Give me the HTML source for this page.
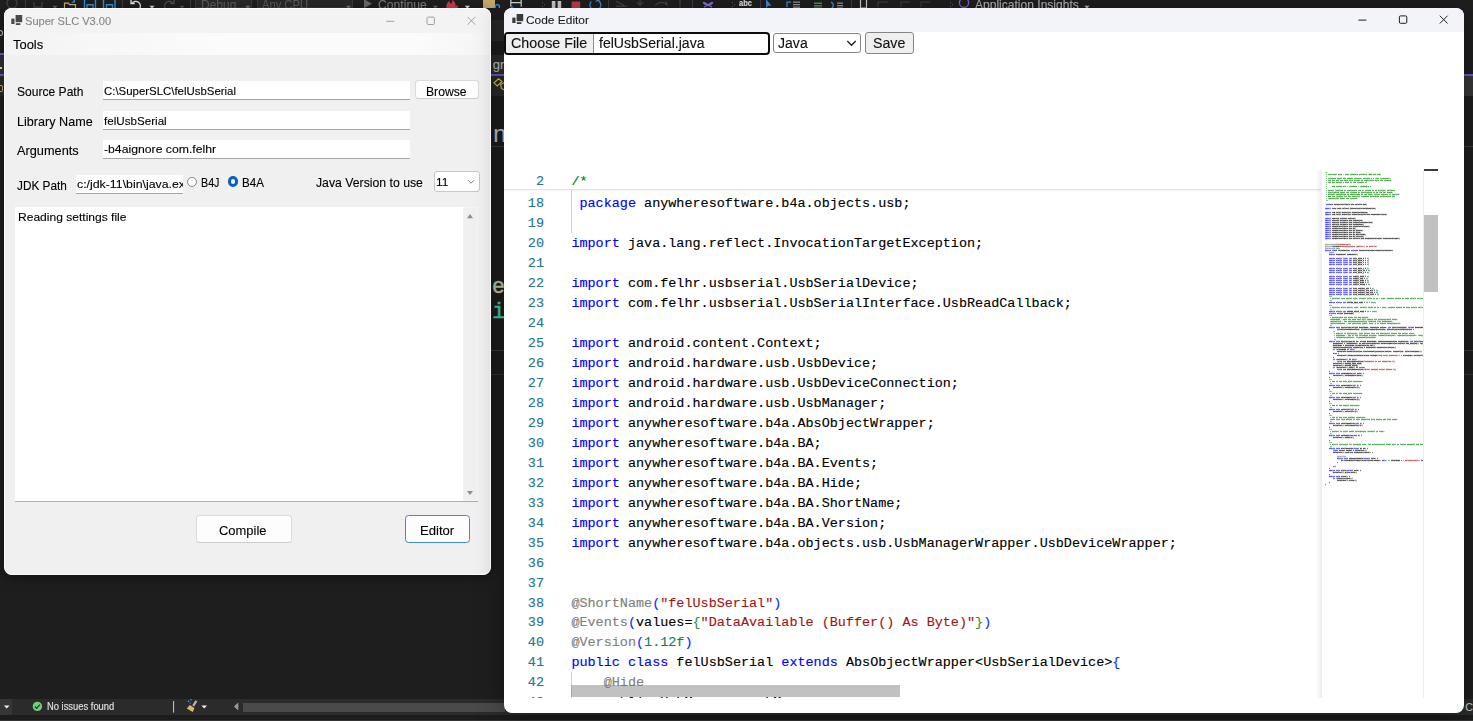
<!DOCTYPE html>
<html lang="en"><head><meta charset="utf-8"><title>Super SLC V3.00 - Code Editor</title>
<style>
html,body{margin:0;padding:0}
body{width:1473px;height:721px;overflow:hidden;background:#1e1e1e;position:relative;font-family:"Liberation Sans",sans-serif;}
.abs,.t{position:absolute}
.t{white-space:pre;line-height:normal;transform-origin:0 0;color:#000;font-family:"Liberation Sans",sans-serif;-webkit-text-stroke:0.12px currentColor}
#w1{position:absolute;left:3.7px;top:8.4px;width:487.8px;height:566.2px;background:#f0f0f0;border-radius:8px;overflow:hidden;box-shadow:0 2px 14px rgba(0,0,0,.4)}
#w2{position:absolute;left:504px;top:7.5px;width:960.4px;height:705.7px;background:#fff;border-radius:8px;overflow:hidden;box-shadow:0 4px 28px rgba(0,0,0,.36)}
.tb{position:absolute;background:#fff;border-bottom:1px solid #a6a6a6;box-sizing:border-box}
.btn{position:absolute;background:#fdfdfd;border:1px solid #dadada;border-bottom-color:#cbcbcb;border-radius:3.5px;box-sizing:border-box}
#code{position:absolute;left:504px;top:170px;width:816.5px;height:527.5px;overflow:hidden}
.cl,.ln{position:absolute;white-space:pre;font-family:"Liberation Mono",monospace;font-size:13.46px;line-height:20px;height:20px;color:#000;-webkit-text-stroke:0.14px currentColor}
.ln{color:#237893;text-align:right;width:40px;left:0}
.k{color:#0000ff}.c{color:#008000}.s{color:#a31515}.a{color:#808080}.n{color:#098658}.b1{color:#0431fa}.b2{color:#319331}
</style></head><body>
<div id="bg"><div class="abs" style="left:0;top:0;width:1473px;height:9px;background:#1f1f1f"></div><div class="abs" style="left:491px;top:20px;width:14px;height:21px;background:#2b2b2b"></div><div class="abs" style="left:491px;top:54.5px;width:14px;height:20px;background:#2e2e2e"></div><div class="abs" style="left:491px;top:74px;width:14px;height:2px;background:#6a5bd8"></div><div class="abs" style="left:491px;top:76px;width:14px;height:20px;background:#2b2b2b"></div><div class="abs" style="left:1463px;top:74px;width:10px;height:2px;background:#6a5bd8"></div><div class="abs" style="left:1463px;top:76px;width:10px;height:20.3px;background:#373737"></div><div class="abs" style="left:1463px;top:146.2px;width:10px;height:1.2px;background:#3d3d3d"></div><div class="abs" style="left:1463px;top:349.5px;width:10px;height:1.3px;background:#3a3a3a"></div><div class="abs" style="left:1463px;top:374px;width:10px;height:1px;background:#333"></div><div class="abs" style="left:0;top:698.8px;width:1473px;height:15.9px;background:#2b2b2b"></div><div class="abs" style="left:0;top:714.7px;width:1473px;height:5px;background:#1c1c1c"></div><div class="abs" style="left:0;top:719.7px;width:1473px;height:1.3px;background:#343434"></div><div class="abs" style="left:243px;top:702.5px;width:262px;height:9px;background:#4a4a4a"></div><div class="abs" style="left:0;top:0;width:1473px;height:8.4px;overflow:hidden"><div class="abs" style="left:195px;top:-12px;width:56.5px;height:19.5px;background:#2a2a2a;border:1px solid #3a3a3a;box-sizing:border-box"></div><div class="abs" style="left:257px;top:-12px;width:96px;height:19.5px;background:#2a2a2a;border:1px solid #3a3a3a;box-sizing:border-box"></div><span class="t" style="left:200.60px;top:-2.00px;font-size:12.4px;color:#5c5c5c;transform:scaleX(0.9688);">Debug</span><span class="t" style="left:262.00px;top:-2.00px;font-size:12.4px;color:#5c5c5c;transform:scaleX(0.9021);">Any CPU</span><span class="t" style="left:378.00px;top:-2.00px;font-size:12.4px;color:#7c7c7c;transform:scaleX(0.9811);">Continue</span><span class="t" style="left:974.80px;top:-2.00px;font-size:12.4px;color:#b4b4b4;transform:scaleX(0.9725);">Application Insights</span><span class="t" style="left:739.00px;top:-3.40px;font-size:9.5px;color:#e8e8e8;transform:scaleX(0.7834);font-weight:bold;">abc</span><svg class="abs" style="left:0;top:0" width="1473" height="9" viewBox="0 0 1473 9"><g transform="translate(0,2.2)"><path d="M52.4 3.6 h5.2 l-2.6 2.8z" fill="#666"/><path d="M149.4 3.6 h5.2 l-2.6 2.8z" fill="#ddd"/><path d="M179.4 3.6 h5.2 l-2.6 2.8z" fill="#555"/><path d="M245.20000000000002 3.6 h5.2 l-2.6 2.8z" fill="#777"/><path d="M345.9 3.6 h5.2 l-2.6 2.8z" fill="#777"/><path d="M432.79999999999995 3.6 h5.2 l-2.6 2.8z" fill="#666"/><path d="M464.79999999999995 3.6 h5.2 l-2.6 2.8z" fill="#eee"/><path d="M1084.4 3.6 h5.2 l-2.6 2.8z" fill="#bbb"/><rect x="25" y="-3" width="1" height="9" fill="#3f3f3f"/><rect x="122" y="-3" width="1" height="9" fill="#3f3f3f"/><rect x="190" y="-3" width="1" height="9" fill="#3f3f3f"/><rect x="608" y="-3" width="1" height="9" fill="#3f3f3f"/><rect x="692" y="-3" width="1" height="9" fill="#3f3f3f"/><rect x="760" y="-3" width="1" height="9" fill="#3f3f3f"/><rect x="851" y="-3" width="1" height="9" fill="#3f3f3f"/><rect x="542" y="0" width="1" height="1" fill="#666"/><rect x="544" y="2" width="1" height="1" fill="#666"/><rect x="542" y="4" width="1" height="1" fill="#666"/><rect x="732" y="0" width="1" height="1" fill="#666"/><rect x="734" y="2" width="1" height="1" fill="#666"/><rect x="732" y="4" width="1" height="1" fill="#666"/><rect x="950" y="0" width="1" height="1" fill="#666"/><rect x="952" y="2" width="1" height="1" fill="#666"/><rect x="950" y="4" width="1" height="1" fill="#666"/><circle cx="12" cy="1" r="5" fill="none" stroke="#444" stroke-width="1.2"/><path d="M34 0 v5 h8 v-5" fill="none" stroke="#4a4a4a" stroke-width="1.2"/><path d="M64.5 1 h4 l1 1.5 h6 v4.5 h-11z" fill="none" stroke="#d2b26a" stroke-width="1.2"/><path d="M71 1 l4 -4 v3z" fill="#3794e0"/><path d="M84.5 -3 h11 v9.5 h-11z M87 2.5 h6 v4 h-6z" fill="none" stroke="#3a8fd9" stroke-width="1.4"/><path d="M103.5 -3 h11.5 v9.5 h-11.5z M106.5 2.5 h6 v4 h-6z" fill="none" stroke="#3a8fd9" stroke-width="1.4"/><path d="M139.5 6.5 a4.6 4.6 0 1 0 -7.5 -5.5 M131 -2.5 v3.8 h3.8" fill="none" stroke="#e4e4e4" stroke-width="1.3"/><path d="M165.5 6.5 a4.6 4.6 0 1 1 7.5 -5.5 M174 -2.5 v3.8 h-3.8" fill="none" stroke="#4c4c4c" stroke-width="1.3"/><path d="M364 -3 l8 4.5 l-8 4.5z" fill="#6a6a6a"/><path d="M446.5 6.5 q-1 -5 3 -8 q0 3 2 3 q1 -2 1 -4 q4 4 3 7 q1 -1 2 -2 q1 3 -1 4z" fill="#d8384a"/><path d="M483 -3 h12 v9.5 h-12z" fill="#c9ab6c"/><circle cx="497.3" cy="4.6" r="2.2" fill="none" stroke="#3794e0" stroke-width="1.3"/><path d="M495.5 6.4 l-2 2" stroke="#3794e0" stroke-width="1.3"/><path d="M510.8 4.6 v-6 q0 -1.4 1.4 -1.4 h7.6 q1.4 0 1.4 1.4 v6 M510.8 0.4 h10.4" fill="none" stroke="#d8d8d8" stroke-width="1.2"/><path d="M511 5.8 l1.2 -1.6 l1.2 1.6" fill="none" stroke="#3a8fd9" stroke-width="1"/><rect x="551.8" y="-1.2" width="3.6" height="7" fill="#cfcfcf"/><rect x="557.6" y="-1.2" width="3.6" height="7" fill="#cfcfcf"/><rect x="571.6" y="-0.8" width="8.6" height="8" rx="1.2" fill="#c9384c"/><path d="M597.5 -2.2 A5.4 5.4 0 1 1 591.3 -0.8" fill="none" stroke="#3a8fd9" stroke-width="1.3"/><path d="M596 -4.6 l3.2 2.2 l-3.4 1.6" fill="none" stroke="#3a8fd9" stroke-width="1.2"/><path d="M616 -1 l8 4 M616 4 h11 M640 -3 v6 l-3 -3 M640 3 l3 -3 M655 3.5 q6 -6 12 -1 l-1 -3 M680 -3 v8" fill="none" stroke="#454545" stroke-width="1.2"/><path d="M703 0 q5 7 10 0 M704 5 l8 -5 M704 0 l8 5" fill="none" stroke="#8a6fd8" stroke-width="1.2"/><path d="M766 -3 l5.5 6.5 h-3.3 l-2.2 2.5z" fill="#3a8fd9"/><path d="M787 5 v-5 h4" fill="none" stroke="#3a8fd9" stroke-width="1.3"/><path d="M793 0 h7 M793 2.5 h7 M793 5 h7" stroke="#9a9a9a" stroke-width="1.2"/><path d="M814 1 h8 M814 3.5 h8 M814 6 h8" stroke="#3f9b4a" stroke-width="1.4"/><path d="M831 0 q4 2 1 6" fill="none" stroke="#3a8fd9" stroke-width="1.4"/><path d="M837 1 h6 M837 3.5 h6 M837 6 h6" stroke="#9a9a9a" stroke-width="1.2"/><path d="M860.5 -3 v9 h6 v-9" fill="none" stroke="#cfcfcf" stroke-width="1.2"/><path d="M878 5 v-5 h10 M901 5 v-5 h9 M921 5 v-5 h9" fill="none" stroke="#3c3c3c" stroke-width="1.2"/><circle cx="964" cy="0.5" r="4.6" fill="none" stroke="#8a5fd0" stroke-width="1.3"/></g></svg></div><span class="t" style="left:492.70px;top:57.10px;font-size:13px;color:#c4c4c4;transform:scaleX(1.0000);">gr</span><svg class="abs" style="left:491px;top:76px" width="14" height="20" viewBox="491 76 14 20"><path d="M494 82.8 L498.6 78.7 L502 81.5 L497.3 85.9 Z M500.6 84.4 L504.5 82.6 L505.5 90.6 L501.4 88.4 Z" fill="none" stroke="#dcbc6a" stroke-width="1.15"/></svg><span class="t" style="left:493.20px;top:120.60px;font-size:23.5px;color:#c4c4c4;transform:scaleX(1.0000);">n</span><div class="abs" style="left:491px;top:146px;width:14px;height:1px;background:#3c3c3c"></div><span class="t" style="left:492.00px;top:274.80px;font-size:21.5px;color:#bdd3a0;font-family:'Liberation Mono',monospace;transform:scaleX(1.0000);-webkit-text-stroke:0.5px #bdd3a0;">e</span><span class="t" style="left:492.20px;top:299.90px;font-size:21.5px;color:#4ec9b0;font-family:'Liberation Mono',monospace;transform:scaleX(1.0000);-webkit-text-stroke:0.5px #4ec9b0;">i</span><div class="abs" style="left:491px;top:349.5px;width:14px;height:1.3px;background:#3a3a3a"></div><div class="abs" style="left:491px;top:374px;width:14px;height:1px;background:#333"></div><div class="abs" style="left:0;top:53.3px;width:5px;height:2px;background:#6a5bd8"></div><div class="abs" style="left:0;top:55.3px;width:5px;height:18.7px;background:#333"></div><div class="abs" style="left:0;top:74px;width:5px;height:2px;background:#6a5bd8"></div><div class="abs" style="left:0;top:76px;width:5px;height:20px;background:#2b2b2b"></div><div class="abs" style="left:0;top:29.5px;width:2.5px;height:6px;border:1.2px solid #c8c8c8;border-left:none;border-radius:0 3px 3px 0;box-sizing:border-box"></div><div class="abs" style="left:0;top:67px;width:2.2px;height:1.6px;background:#ddd"></div><div class="abs" style="left:0;top:85px;width:2.5px;height:7px;border:1.2px solid #d8b560;border-left:none;border-radius:0 2px 2px 0;box-sizing:border-box"></div><div class="abs" style="left:0;top:698.8px;width:12px;height:16px;background:#363636"></div><svg class="abs" style="left:0;top:698px" width="260" height="18" viewBox="0 0 260 18"><path d="M3.9 7.6 h5.6 l-2.8 3z" fill="#f0f0f0"/><circle cx="37.4" cy="8.4" r="4.7" fill="#6fcf73"/><path d="M34.9 8.5 l1.8 1.8 l3.2 -3.6" fill="none" stroke="#1e3a1e" stroke-width="1.2"/><rect x="173" y="3" width="1.1" height="11.6" fill="#bdbdbd"/><path d="M195.5 2.2 l1.8 1.2 l-3.2 5 l-1.8 -1.2z" fill="#b9b9b9"/><path d="M189.8 7 l4.6 3 l-1.6 4 l-6 -3.4z" fill="#dcb867"/><circle cx="188.5" cy="3.3" r="0.8" fill="#4aa3ff"/><circle cx="191" cy="1.8" r="0.7" fill="#4aa3ff"/><circle cx="190.2" cy="5" r="0.6" fill="#4aa3ff"/><path d="M201.4 7.6 h5.6 l-2.8 3z" fill="#f0f0f0"/><path d="M238.3 4.6 v8 l-4.4 -4z" fill="#999"/></svg><span class="t" style="left:47.10px;top:700.30px;font-size:10.6px;color:#e4e4e4;transform:scaleX(0.8854);">No issues found</span><span class="t" style="left:1465.20px;top:701.20px;font-size:10.6px;color:#c8c8c8;transform:scaleX(1.0000);">CH</span></div><div id="w1"></div><div class="abs" style="left:3.7px;top:8.4px;width:487.8px;height:24.7px;background:#f3f3f3;border-radius:8px 8px 0 0"></div><div class="abs" style="left:3.7px;top:33.1px;width:487.8px;height:21.8px;background:linear-gradient(90deg,#f3f3f3 0%,#f6f6f6 15%,#fbfbfb 45%,#fbfbfb 85%,#f4f4f4 100%)"></div><span class="t" style="left:25.40px;top:14.00px;font-size:11.8px;color:#868686;transform:scaleX(0.9386);">Super SLC V3.00</span><span class="t" style="left:13.40px;top:37.00px;font-size:13px;color:#000;transform:scaleX(0.9951);">Tools</span><span class="t" style="left:16.90px;top:83.80px;font-size:13px;color:#000;transform:scaleX(0.9281);">Source Path</span><span class="t" style="left:16.90px;top:114.30px;font-size:13px;color:#000;transform:scaleX(0.9702);">Library Name</span><span class="t" style="left:16.90px;top:142.50px;font-size:13px;color:#000;transform:scaleX(0.9815);">Arguments</span><span class="t" style="left:16.80px;top:177.80px;font-size:13px;color:#000;transform:scaleX(0.9069);">JDK Path</span><div class="tb" style="left:102.9px;top:80.5px;width:307.5px;height:19px"></div><div class="tb" style="left:102.9px;top:111px;width:307.5px;height:19px"></div><div class="tb" style="left:102.9px;top:139.6px;width:307.5px;height:19px"></div><div class="tb" style="left:76px;top:174.6px;width:107.4px;height:19px;overflow:hidden"></div><span class="t" style="left:103.60px;top:83.60px;font-size:11.8px;color:#000;transform:scaleX(0.9676);">C:\SuperSLC\felUsbSerial</span><span class="t" style="left:103.90px;top:113.70px;font-size:11.8px;color:#000;transform:scaleX(0.9856);">felUsbSerial</span><span class="t" style="left:104.40px;top:142.30px;font-size:11.8px;color:#000;transform:scaleX(1.0367);">-b4aignore com.felhr</span><div class="abs" style="left:76px;top:174.6px;width:107.2px;height:18px;overflow:hidden"><span class="t" style="left:1.4px;top:2.80px;font-size:11.8px;transform:scaleX(1.0440)">c:/jdk-11\bin\java.exe</span></div><div class="btn" style="left:414.6px;top:79.8px;width:64px;height:19px"></div><span class="t" style="left:425.80px;top:83.50px;font-size:13px;color:#000;transform:scaleX(0.9366);">Browse</span><div class="abs" style="left:186.8px;top:176.5px;width:10px;height:10px;border-radius:50%;background:#fff;border:1px solid #8a8a8a;box-sizing:border-box"></div><span class="t" style="left:201.20px;top:175.70px;font-size:12.6px;color:#000;transform:scaleX(0.8520);">B4J</span><div class="abs" style="left:227.8px;top:176.3px;width:10.4px;height:10.4px;border-radius:50%;background:#fff;border:3.2px solid #0a5fc0;box-sizing:border-box"></div><span class="t" style="left:242.40px;top:175.70px;font-size:12.6px;color:#000;transform:scaleX(0.9195);">B4A</span><span class="t" style="left:316.30px;top:175.20px;font-size:13px;color:#000;transform:scaleX(0.9422);">Java Version to use</span><div class="abs" style="left:434.2px;top:171.3px;width:45.4px;height:20.6px;background:#fff;border:1px solid #c8c8c8;border-radius:3px;box-sizing:border-box"></div><span class="t" style="left:436.30px;top:175.00px;font-size:11.8px;color:#000;transform:scaleX(1.0041);">11</span><svg class="abs" style="left:466px;top:178px" width="10" height="8" viewBox="0 0 10 8"><path d="M2 2.2 L5 5.2 L8 2.2" fill="none" stroke="#777" stroke-width="1"/></svg><div class="abs" style="left:14.6px;top:207.1px;width:463.4px;height:294.8px;background:#fff;border-bottom:1px solid #adadad;box-sizing:border-box"></div><div class="abs" style="left:463.1px;top:207.1px;width:14.9px;height:293.9px;background:#f0f0f0;border:1px solid #f5f5f5;border-left:none;box-sizing:border-box"></div><svg class="abs" style="left:466.4px;top:212.6px" width="8" height="6" viewBox="0 0 8 6"><path d="M1 5.2 L4 1.1 L7 5.2 Z" fill="#8c8c8c"/></svg><svg class="abs" style="left:466.4px;top:490.4px" width="8" height="6" viewBox="0 0 8 6"><path d="M1 0.9 L4 5 L7 0.9 Z" fill="#8c8c8c"/></svg><span class="t" style="left:18.30px;top:209.70px;font-size:11.8px;color:#000;transform:scaleX(1.0210);">Reading settings file</span><div class="btn" style="left:195.6px;top:515.2px;width:96.9px;height:28.2px"></div><span class="t" style="left:219.40px;top:522.50px;font-size:13px;color:#000;transform:scaleX(0.9961);">Compile</span><div class="btn" style="left:404.9px;top:515.2px;width:65.3px;height:28.2px;border:1.3px solid #3f8ad8"></div><span class="t" style="left:420.10px;top:522.50px;font-size:13px;color:#000;transform:scaleX(1.0070);">Editor</span><svg class="abs" style="left:11px;top:14.7px" width="12" height="11" viewBox="0 0 12 11"><rect x="4.6" y="0" width="6.6" height="7.2" fill="#4a4a4a"/><rect x="0.3" y="3.6" width="3.2" height="5.4" fill="#4a4a4a"/><rect x="4.8" y="8.2" width="4.6" height="1.8" fill="#4a4a4a"/></svg><svg class="abs" style="left:0;top:0" width="1473" height="40" viewBox="0 0 1473 40" fill="none" stroke="#969696" stroke-width="0.9"><path d="M386.3 21.3 h8"/><rect x="427.0" y="17.1" width="7.4" height="7.4" rx="1.2"/><path d="M467.5 16.900000000000002 l7.8 7.8 M475.29999999999995 16.900000000000002 l-7.8 7.8"/></svg><div id="w2"></div><div class="abs" style="left:3.7px;top:8.4px;width:487.8px;height:566.2px;border:1.2px solid rgba(255,255,255,.75);border-radius:8px;box-sizing:border-box;pointer-events:none"></div><div class="abs" style="left:504px;top:7.5px;width:960.4px;height:24.5px;background:#f3f3fa;border-radius:8px 8px 0 0"></div><svg class="abs" style="left:511.5px;top:14px" width="12" height="11" viewBox="0 0 12 11"><rect x="4.6" y="0" width="6.6" height="7.2" fill="#3a3a3a"/><rect x="0.3" y="3.6" width="3.2" height="5.4" fill="#3a3a3a"/><rect x="4.8" y="8.2" width="4.6" height="1.8" fill="#3a3a3a"/></svg><span class="t" style="left:526.40px;top:13.40px;font-size:11.8px;color:#1b1b1b;transform:scaleX(1.0102);">Code Editor</span><svg class="abs" style="left:0;top:0" width="1473" height="40" viewBox="0 0 1473 40" fill="none" stroke="#1f1f1f" stroke-width="1"><path d="M1358.4 20.1 h8"/><rect x="1399.3999999999999" y="15.900000000000002" width="7.4" height="7.4" rx="1.2"/><path d="M1439.8 15.700000000000001 l7.8 7.8 M1447.6000000000001 15.700000000000001 l-7.8 7.8"/></svg><div class="abs" style="left:504.4px;top:32.1px;width:265.4px;height:23.1px;border:2.1px solid #0c0c0c;border-radius:4px;box-sizing:border-box;background:#fff"></div><div class="abs" style="left:506.4px;top:34.1px;width:88px;height:19.1px;background:#efefef;border-right:1.2px solid #8f8f8f;border-radius:2px 0 0 2px;box-sizing:border-box"></div><span class="t" style="left:511.40px;top:34.80px;font-size:14px;color:#111;transform:scaleX(1.0200);">Choose File</span><span class="t" style="left:599.10px;top:34.80px;font-size:14px;color:#111;transform:scaleX(1.0043);">felUsbSerial.java</span><div class="abs" style="left:773px;top:32.9px;width:88px;height:20.1px;border:1.25px solid #858585;border-radius:3px;box-sizing:border-box;background:#fff"></div><span class="t" style="left:777.90px;top:34.70px;font-size:14px;color:#111;transform:scaleX(1.0043);">Java</span><svg class="abs" style="left:846px;top:39px" width="11" height="9" viewBox="0 0 11 9"><path d="M1.3 2.1 L5.5 6.3 L9.7 2.1" fill="none" stroke="#1e1e1e" stroke-width="1.35"/></svg><div class="abs" style="left:865.2px;top:32.1px;width:48.8px;height:22.1px;border:1.3px solid #858585;border-radius:3px;box-sizing:border-box;background:#efefef"></div><span class="t" style="left:873.30px;top:34.70px;font-size:14px;color:#111;transform:scaleX(1.0122);">Save</span><div id="code"><div class="ln" style="top:24.10px">18</div><div class="cl" style="left:67.40px;top:24.10px"> <span class="k">package</span> anywheresoftware.b4a.objects.usb;</div><div class="ln" style="top:44.07px">19</div><div class="cl" style="left:67.40px;top:44.07px"></div><div class="ln" style="top:64.04px">20</div><div class="cl" style="left:67.40px;top:64.04px"><span class="k">import</span> java.lang.reflect.InvocationTargetException;</div><div class="ln" style="top:84.01px">21</div><div class="cl" style="left:67.40px;top:84.01px"></div><div class="ln" style="top:103.98px">22</div><div class="cl" style="left:67.40px;top:103.98px"><span class="k">import</span> com.felhr.usbserial.UsbSerialDevice;</div><div class="ln" style="top:123.95px">23</div><div class="cl" style="left:67.40px;top:123.95px"><span class="k">import</span> com.felhr.usbserial.UsbSerialInterface.UsbReadCallback;</div><div class="ln" style="top:143.92px">24</div><div class="cl" style="left:67.40px;top:143.92px"></div><div class="ln" style="top:163.89px">25</div><div class="cl" style="left:67.40px;top:163.89px"><span class="k">import</span> android.content.Context;</div><div class="ln" style="top:183.86px">26</div><div class="cl" style="left:67.40px;top:183.86px"><span class="k">import</span> android.hardware.usb.UsbDevice;</div><div class="ln" style="top:203.83px">27</div><div class="cl" style="left:67.40px;top:203.83px"><span class="k">import</span> android.hardware.usb.UsbDeviceConnection;</div><div class="ln" style="top:223.80px">28</div><div class="cl" style="left:67.40px;top:223.80px"><span class="k">import</span> android.hardware.usb.UsbManager;</div><div class="ln" style="top:243.77px">29</div><div class="cl" style="left:67.40px;top:243.77px"><span class="k">import</span> anywheresoftware.b4a.AbsObjectWrapper;</div><div class="ln" style="top:263.74px">30</div><div class="cl" style="left:67.40px;top:263.74px"><span class="k">import</span> anywheresoftware.b4a.BA;</div><div class="ln" style="top:283.71px">31</div><div class="cl" style="left:67.40px;top:283.71px"><span class="k">import</span> anywheresoftware.b4a.BA.Events;</div><div class="ln" style="top:303.68px">32</div><div class="cl" style="left:67.40px;top:303.68px"><span class="k">import</span> anywheresoftware.b4a.BA.Hide;</div><div class="ln" style="top:323.65px">33</div><div class="cl" style="left:67.40px;top:323.65px"><span class="k">import</span> anywheresoftware.b4a.BA.ShortName;</div><div class="ln" style="top:343.62px">34</div><div class="cl" style="left:67.40px;top:343.62px"><span class="k">import</span> anywheresoftware.b4a.BA.Version;</div><div class="ln" style="top:363.59px">35</div><div class="cl" style="left:67.40px;top:363.59px"><span class="k">import</span> anywheresoftware.b4a.objects.usb.UsbManagerWrapper.UsbDeviceWrapper;</div><div class="ln" style="top:383.56px">36</div><div class="cl" style="left:67.40px;top:383.56px"></div><div class="ln" style="top:403.53px">37</div><div class="cl" style="left:67.40px;top:403.53px"></div><div class="ln" style="top:423.50px">38</div><div class="cl" style="left:67.40px;top:423.50px"><span class="a">@ShortName</span><span class="b1">(</span><span class="s">"felUsbSerial"</span><span class="b1">)</span></div><div class="ln" style="top:443.47px">39</div><div class="cl" style="left:67.40px;top:443.47px"><span class="a">@Events</span><span class="b1">(</span>values=<span class="b2">{</span><span class="s">"DataAvailable (Buffer() As Byte)"</span><span class="b2">}</span><span class="b1">)</span></div><div class="ln" style="top:463.44px">40</div><div class="cl" style="left:67.40px;top:463.44px"><span class="a">@Version</span><span class="b1">(</span><span class="n">1.12f</span><span class="b1">)</span></div><div class="ln" style="top:483.41px">41</div><div class="cl" style="left:67.40px;top:483.41px"><span class="k">public</span> <span class="k">class</span> felUsbSerial <span class="k">extends</span> AbsObjectWrapper&lt;UsbSerialDevice&gt;<span class="b1">{</span></div><div class="ln" style="top:503.38px">42</div><div class="cl" style="left:67.40px;top:503.38px">    <span class="a">@Hide</span></div><div class="ln" style="top:523.35px">43</div><div class="cl" style="left:67.40px;top:523.35px">    <span class="k">public</span> UsbManager usbManager;</div><div class="abs" style="left:67.4px;top:20px;width:1px;height:42.6px;background:#d3d3d3"></div><div class="abs" style="left:67.4px;top:502px;width:1px;height:30px;background:#d3d3d3"></div><div class="abs" style="left:0;top:0;width:100%;height:19.3px;background:#fff;border-bottom:1px solid #e2e2e2;box-shadow:0 1px 2px rgba(0,0,0,.04)"><div class="ln" style="top:2.2px">2</div><div class="cl" style="left:67.40px;top:2.2px"><span class="c">/*</span></div></div><div class="abs" style="left:67.4px;top:515.2px;width:329px;height:12.3px;background:rgba(100,100,100,.4)"></div></div><div class="abs" style="left:1315.5px;top:169.5px;width:6px;height:528px;background:linear-gradient(90deg,rgba(0,0,0,0),rgba(0,0,0,.075))"></div><div class="abs" style="left:1423px;top:170px;width:1px;height:527.5px;background:#ececec"></div><div class="abs" style="left:1423.5px;top:169.1px;width:14px;height:2.2px;background:#3a3a3a"></div><div class="abs" style="left:1423.5px;top:215.4px;width:14px;height:76.2px;background:#c1c1c1"></div><div class="abs" style="left:1321.5px;top:170px;width:101.2px;height:527.5px;overflow:hidden;filter:blur(0.45px)"><pre id="mm" style="position:absolute;left:3.5px;top:0.6px;margin:0;font-family:'Liberation Mono',monospace;font-size:10px;line-height:8px;font-weight:bold;color:#000;-webkit-text-stroke:1.0px currentColor;opacity:.72;transform:scale(0.16664,0.25188);transform-origin:0 0;white-space:pre">
<span class="c">/*</span>
<span class="c"> * Copyright 2010 - 2020 Anywhere Software (www.b4x.com)</span>
<span class="c"> *</span>
<span class="c"> * Licensed under the Apache License, Version 2.0 (the "License");</span>
<span class="c"> * you may not use this file except in compliance with the License.</span>
<span class="c"> * You may obtain a copy of the License at</span>
<span class="c"> *</span>
<span class="c"> *     www.apache.org / licenses / LICENSE-2.0</span>
<span class="c"> *</span>
<span class="c"> * Unless required by applicable law or agreed to in writing, software</span>
<span class="c"> * distributed under the License is distributed on an "AS IS" BASIS,</span>
<span class="c"> * WITHOUT WARRANTIES OR CONDITIONS OF ANY KIND, either express or implied.</span>
<span class="c"> * See the License for the specific language governing permissions and</span>
<span class="c"> * limitations under the License.</span>
<span class="c"> */</span>

 <span class="k">package</span> anywheresoftware.b4a.objects.usb;

<span class="k">import</span> java.lang.reflect.InvocationTargetException;

<span class="k">import</span> com.felhr.usbserial.UsbSerialDevice;
<span class="k">import</span> com.felhr.usbserial.UsbSerialInterface.UsbReadCallback;

<span class="k">import</span> android.content.Context;
<span class="k">import</span> android.hardware.usb.UsbDevice;
<span class="k">import</span> android.hardware.usb.UsbDeviceConnection;
<span class="k">import</span> android.hardware.usb.UsbManager;
<span class="k">import</span> anywheresoftware.b4a.AbsObjectWrapper;
<span class="k">import</span> anywheresoftware.b4a.BA;
<span class="k">import</span> anywheresoftware.b4a.BA.Events;
<span class="k">import</span> anywheresoftware.b4a.BA.Hide;
<span class="k">import</span> anywheresoftware.b4a.BA.ShortName;
<span class="k">import</span> anywheresoftware.b4a.BA.Version;
<span class="k">import</span> anywheresoftware.b4a.objects.usb.UsbManagerWrapper.UsbDeviceWrapper;


<span class="a">@ShortName</span>(<span class="s">"felUsbSerial"</span>)
<span class="a">@Events</span>(values={<span class="s">"DataAvailable (Buffer() As Byte)"</span>})
<span class="a">@Version</span>(<span class="n">1.12f</span>)
<span class="k">public</span> <span class="k">class</span> felUsbSerial <span class="k">extends</span> AbsObjectWrapper&lt;UsbSerialDevice&gt;{
    <span class="a">@Hide</span>
    <span class="k">public</span> UsbManager usbManager;

    <span class="k">public</span> <span class="k">static</span> <span class="k">final</span> <span class="k">int</span> DATA_BITS_5 = <span class="n">5</span>;
    <span class="k">public</span> <span class="k">static</span> <span class="k">final</span> <span class="k">int</span> DATA_BITS_6 = <span class="n">6</span>;
    <span class="k">public</span> <span class="k">static</span> <span class="k">final</span> <span class="k">int</span> DATA_BITS_7 = <span class="n">7</span>;
    <span class="k">public</span> <span class="k">static</span> <span class="k">final</span> <span class="k">int</span> DATA_BITS_8 = <span class="n">8</span>;

    <span class="k">public</span> <span class="k">static</span> <span class="k">final</span> <span class="k">int</span> STOP_BITS_1 = <span class="n">1</span>;
    <span class="k">public</span> <span class="k">static</span> <span class="k">final</span> <span class="k">int</span> STOP_BITS_15 = <span class="n">3</span>;
    <span class="k">public</span> <span class="k">static</span> <span class="k">final</span> <span class="k">int</span> STOP_BITS_2 = <span class="n">2</span>;

    <span class="k">public</span> <span class="k">static</span> <span class="k">final</span> <span class="k">int</span> PARITY_NONE = <span class="n">0</span>;
    <span class="k">public</span> <span class="k">static</span> <span class="k">final</span> <span class="k">int</span> PARITY_ODD = <span class="n">1</span>;
    <span class="k">public</span> <span class="k">static</span> <span class="k">final</span> <span class="k">int</span> PARITY_EVEN = <span class="n">2</span>;
    <span class="k">public</span> <span class="k">static</span> <span class="k">final</span> <span class="k">int</span> PARITY_MARK = <span class="n">3</span>;
    <span class="k">public</span> <span class="k">static</span> <span class="k">final</span> <span class="k">int</span> PARITY_SPACE = <span class="n">4</span>;

    <span class="k">public</span> <span class="k">static</span> <span class="k">final</span> <span class="k">int</span> FLOW_CONTROL_OFF = <span class="n">0</span>;
    <span class="k">public</span> <span class="k">static</span> <span class="k">final</span> <span class="k">int</span> FLOW_CONTROL_RTS_CTS = <span class="n">1</span>;
    <span class="k">public</span> <span class="k">static</span> <span class="k">final</span> <span class="k">int</span> FLOW_CONTROL_DSR_DTR = <span class="n">2</span>;
    <span class="k">public</span> <span class="k">static</span> <span class="k">final</span> <span class="k">int</span> FLOW_CONTROL_XON_XOFF = <span class="n">3</span>;
    <span class="c">/**</span>
<span class="c">     * Internal read buffer size. Default value is 16 * 1024. Changes should be done before callin</span>
<span class="c">     */</span>
    <span class="k">public</span> <span class="k">static</span> <span class="k">int</span> BUFFER_READ_SIZE = <span class="n">16</span> * <span class="n">1024</span>;
    <span class="c">/**</span>
<span class="c">     * Internal write buffer size. Default value is 16 * 1024. Changes should be done before calli</span>
<span class="c">     */</span>
    <span class="k">public</span> <span class="k">static</span> <span class="k">int</span> BUFFER_WRITE_SIZE = <span class="n">16</span> * <span class="n">1024</span>;
    <span class="k">private</span> String EventName;
    <span class="c">/**</span>
<span class="c">     * Initializes and opens the usb device.</span>
<span class="c">     *EventName - Sets the subs that will handle the DataAvailable event.</span>
<span class="c">     *Connection - The UsbDeviceConnection returned from UsbManager.</span>
<span class="c">     *InterfaceIndex - The interface index. Pass -1 to choose automatically.</span>
<span class="c">     */</span>
    <span class="k">public</span> <span class="k">void</span> Initialize(String EventName, UsbDevice Device, <span class="k">int</span> InterfaceIndex) <span class="k">throws</span> NoSuchMe
            IllegalAccessException, IllegalArgumentException, InvocationTargetException {
        <span class="c">/*</span>
<span class="c">         * Similar to Initialize. This method lets you explicitly choose the serial class.</span>
<span class="c">         * ClassName - One of the following strings: "CDCSerialDevice", "CH34xSerialDevice", "CP21</span>
<span class="c">         * "FTDISerialDevice", "PL2303SerialDevice"</span>
<span class="c">         */</span>
    <span class="k">public</span> <span class="k">void</span> Initialize2(BA ba, String EventName, UsbDeviceConnection Connection, <span class="k">int</span> Interface
        usbManager = (UsbManager) BA.applicationContext.getSystemService(Context.USB_SERVICE); thi
        EventName = EventName.toLowerCase(BA.cul);
        UsbDeviceConnection connection = usbManager.openDevice(Device);
        <span class="k">if</span> (ClassName == <span class="k">null</span>)
            setObject(UsbSerialDevice.createUsbSerialDevice(Device, connection, InterfaceIndex));
        <span class="k">else</span> {
            setObject((UsbSerialDevice)Class.forName(<span class="s">"com.felhr.usbserial."</span> + ClassName).getConstr
        }
        <span class="k">if</span> (getObject() == <span class="k">null</span>)
            <span class="k">throw</span> <span class="k">new</span> RuntimeException(<span class="s">"UsbDevice is not supported."</span>);
        getObject().BUFFER_READ_SIZE;
        getObject().BUFFER_WRITE;
        <span class="k">if</span> (getObject().open() == <span class="k">false</span>)
            <span class="k">throw</span> <span class="k">new</span> RuntimeException(<span class="s">"Error opening serial device."</span>);
    }
    <span class="k">public</span> <span class="k">void</span> setBaudRate(<span class="k">int</span> Rate) {
        getObject().setBaudRate(Rate);
    }
    <span class="c">/**</span>
<span class="c">     * One of the DATA_BITS constants.</span>
<span class="c">     */</span>
    <span class="k">public</span> <span class="k">void</span> setDataBits(<span class="k">int</span> i) {
        getObject().setDataBits(i);
    }
    <span class="c">/**</span>
<span class="c">     * One of the STOP_BITS constants.</span>
<span class="c">     */</span>
    <span class="k">public</span> <span class="k">void</span> setStopBits(<span class="k">int</span> i) {
        getObject().setStopBits(i);
    }
    <span class="c">/**</span>
<span class="c">     * One of the PARITY constants.</span>
<span class="c">     */</span>
    <span class="k">public</span> <span class="k">void</span> setParity(<span class="k">int</span> i) {
        getObject().setParity(i);
    }
    <span class="c">/**</span>
<span class="c">     * One of the FLOW_CONTROL constants.</span>
<span class="c">     *Note that this method is only supported with CP2102 and FTDI chips.</span>
<span class="c">     */</span>
    <span class="k">public</span> <span class="k">void</span> setFlowControl(<span class="k">int</span> i) {
        getObject().setFlowControl(i);
    }
    <span class="c">/**</span>
<span class="c">     * Whether to print debug information (default is true).</span>
<span class="c">     */</span>
    <span class="k">public</span> <span class="k">void</span> setDebug(<span class="k">boolean</span> b) {
        getObject().debug(b);
    }
    <span class="c">/**</span>
<span class="c">     * Starts listening for incoming data. The DataAvailable event will be raised whenever new dat</span>
<span class="c">     */</span>
    <span class="k">public</span> <span class="k">void</span> StartReading(<span class="k">final</span> BA ba) {
        <span class="k">final</span> Object sender = getObject();
        getObject().read(<span class="k">new</span> UsbReadCallback() {

            <span class="a">@Override</span>
            <span class="k">public</span> <span class="k">void</span> onReceivedData(<span class="k">byte</span>[] data) {
                ba.raiseEventFromDifferentThread(sender, <span class="k">null</span>, <span class="n">0</span>, eventName + <span class="s">"_dataavailable"</span>, fa
            }

        });
    }
    <span class="k">public</span> <span class="k">void</span> Write(<span class="k">byte</span>[] Data) {
        getObject().write(Data);
    }
    <span class="k">public</span> <span class="k">void</span> Close() {
        <span class="k">if</span> (IsInitialized())
            getObject().close();
    }
}</pre></div></body></html>
